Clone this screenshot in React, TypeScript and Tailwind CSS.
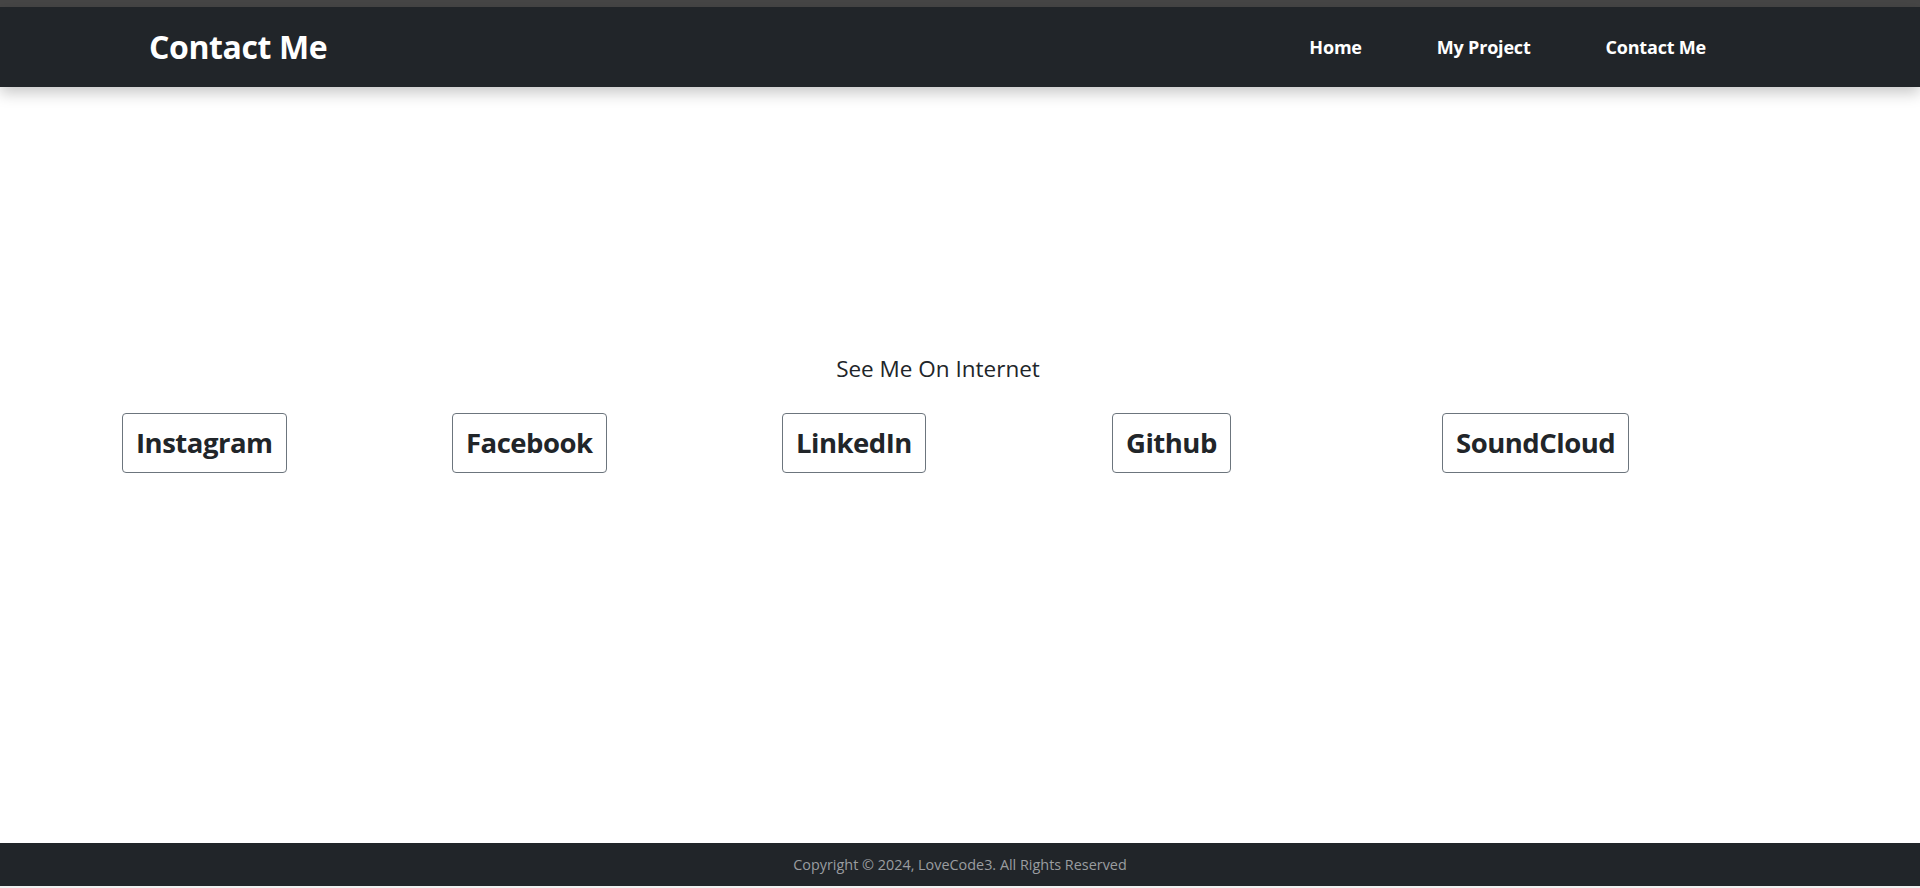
const links = ["Instagram", "Facebook", "LinkedIn", "Github", "SoundCloud"];

export default function App() {
  return (
    <div className="flex h-[888px] w-full flex-col overflow-hidden bg-white font-['Open_Sans',sans-serif] text-[#212529]">
      <div className="h-[7px] bg-[#464646]" />
      <header className="relative z-10 flex h-[80px] items-center bg-[#212529] pl-[149px] pr-[214px] shadow-[0_6px_14px_rgba(0,0,0,0.22)]">
        <h1 className="text-[32px] font-bold tracking-[-0.4px] text-white">Contact Me</h1>
        <nav className="ml-auto flex gap-[75px] text-[18px] font-bold tracking-[-0.2px] text-white">
          <a href="#">Home</a>
          <a href="#">My Project</a>
          <a href="#">Contact Me</a>
        </nav>
      </header>

      <main className="flex flex-1 flex-col pt-[266px]">
        <p className="pr-[44px] text-center text-[22.5px] leading-[32px]">See Me On Internet</p>
        <div className="mt-[28px] flex pl-[122px]">
          {links.map((name) => (
            <div key={name} className="w-[330px]">
              <a
                href="#"
                className="inline-block rounded-[4px] border border-[#6c757d] px-[13px] py-[11px] text-[27.5px] leading-[36px] font-bold tracking-[-0.5px]"
              >
                {name}
              </a>
            </div>
          ))}
        </div>
      </main>

      <footer className="flex h-[43px] items-center justify-center bg-[#212529] text-[14.4px] text-[#9a9da0]">
        Copyright © 2024, LoveCode3. All Rights Reserved
      </footer>
      <div className="h-[2px] bg-[#f0f0f0]" />
    </div>
  );
}
